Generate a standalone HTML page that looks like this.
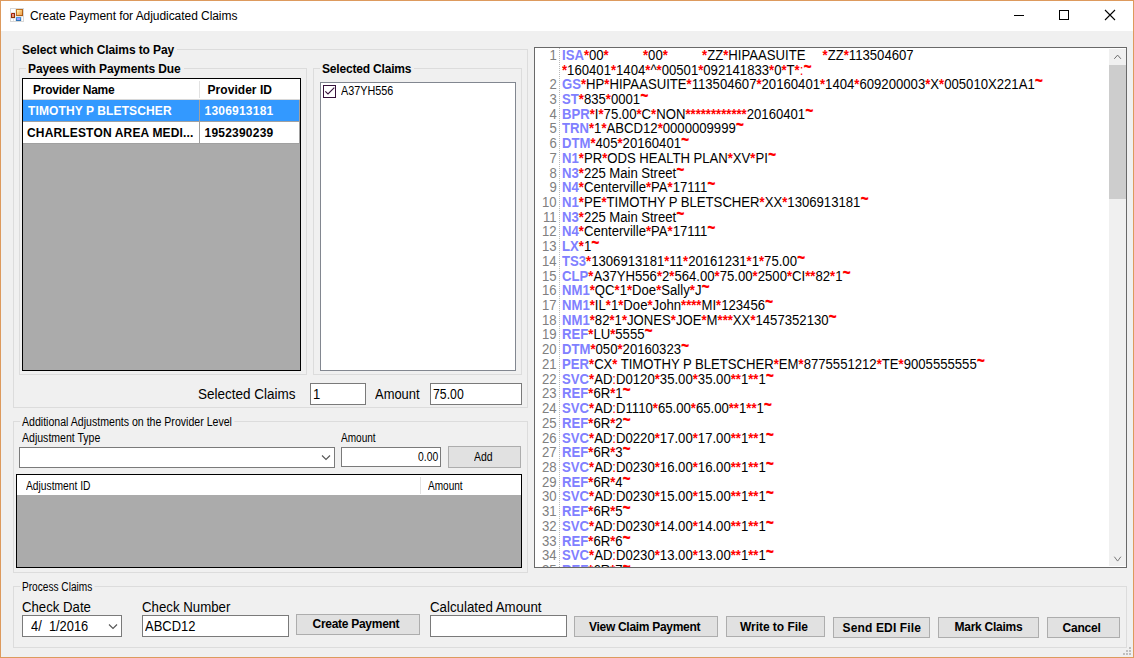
<!DOCTYPE html>
<html><head><meta charset="utf-8"><title>Create Payment for Adjudicated Claims</title>
<style>
html,body{margin:0;padding:0;}
body{width:1134px;height:658px;position:relative;overflow:hidden;background:#f0f0f0;font-family:"Liberation Sans", Arial, sans-serif;}
body div,body svg,body span.t{position:absolute;}
span.t{white-space:pre;}
b.s{color:#8080ff;font-weight:700;}
b.r{color:#ff0000;font-weight:700;}
b.r u{text-decoration:none;font-weight:400;}
b.r i{font-style:normal;position:relative;top:-6.3px;font-size:15px;line-height:0;display:inline-block;transform:scaleY(1.45);transform-origin:50% -5px;}
</style></head><body>
<div style="left:0;top:0;width:1134px;height:658px;background:#dd9a5d;"></div>
<div style="left:1px;top:1px;width:1132px;height:656px;background:#f0f0f0;"></div>
<div style="left:1px;top:1px;width:1132px;height:30px;background:#fff;"></div>
<svg style="left:10px;top:8px" width="14" height="14" viewBox="0 0 14 14" shape-rendering="crispEdges">
<defs><linearGradient id="go" x1="0" y1="0" x2="1" y2="1"><stop offset="0" stop-color="#fffcc0"/><stop offset="0.5" stop-color="#f8c474"/><stop offset="1" stop-color="#f0a050"/></linearGradient>
<linearGradient id="gr" x1="0" y1="0" x2="0" y2="1"><stop offset="0" stop-color="#f47ca4"/><stop offset="1" stop-color="#e8a44c"/></linearGradient>
<linearGradient id="gb" x1="0" y1="0" x2="0" y2="1"><stop offset="0" stop-color="#52a0e8"/><stop offset="1" stop-color="#2c6eb0"/></linearGradient>
<linearGradient id="gob" x1="0" y1="0" x2="1" y2="1"><stop offset="0" stop-color="#cc8028"/><stop offset="1" stop-color="#a8540c"/></linearGradient></defs>
<rect x="0" y="0" width="14" height="14" fill="#d8d8d8"/>
<rect x="1" y="1" width="12" height="12" fill="#fff"/>
<rect x="5" y="1" width="1" height="12" fill="#e6e6e6"/>
<rect x="1" y="4" width="4" height="1" fill="#e6e6e6"/>
<rect x="1" y="10" width="4" height="1" fill="#e6e6e6"/>
<rect x="3" y="11" width="1" height="2" fill="#e6e6e6"/>
<rect x="6" y="8" width="7" height="1" fill="#e6e6e6"/>
<rect x="11" y="9" width="1" height="4" fill="#e6e6e6"/>
<rect x="6" y="1" width="7" height="7" fill="url(#gob)"/>
<rect x="7" y="2" width="5" height="5" fill="url(#go)"/>
<rect x="1" y="5" width="4" height="5" fill="#8c2c0c"/>
<rect x="2" y="6" width="2" height="3" fill="url(#gr)"/>
<rect x="1" y="5" width="1" height="1" fill="#f04418"/>
<rect x="6" y="9" width="5" height="4" fill="url(#gb)"/>
<rect x="7" y="10" width="3" height="2" fill="#9c9cff"/>
</svg>
<span class="t" style="left:30px;top:7.84px;font-size:12px;line-height:16px;font-weight:400;color:#000;letter-spacing:-0.056px;">Create Payment for Adjudicated Claims</span>
<div style="left:1014px;top:15px;width:10px;height:1px;background:#000;"></div>
<div style="left:1059px;top:10px;width:10px;height:10px;border:1px solid #000;box-sizing:border-box;"></div>
<svg style="left:1104px;top:9px" width="12" height="12" viewBox="0 0 12 12"><path d="M1 1 L11 11 M11 1 L1 11" stroke="#000" stroke-width="1.1" fill="none"/></svg>
<div style="left:13px;top:49px;width:515px;height:359px;border:1px solid #dcdcdc;box-sizing:border-box;"></div>
<span class="t" style="left:20px;top:41.84px;font-size:12px;line-height:16px;font-weight:700;color:#000;letter-spacing:-0.1px;background:#f0f0f0;padding:0 3px 0 2px;">Select which Claims to Pay</span>
<div style="left:19px;top:68px;width:288px;height:307px;border:1px solid #dcdcdc;box-sizing:border-box;"></div>
<span class="t" style="left:26px;top:60.84px;font-size:12px;line-height:16px;font-weight:700;color:#000;letter-spacing:-0.087px;background:#f0f0f0;padding:0 3px 0 2px;">Payees with Payments Due</span>
<div style="left:313px;top:68px;width:209px;height:307px;border:1px solid #dcdcdc;box-sizing:border-box;"></div>
<span class="t" style="left:320px;top:60.84px;font-size:12px;line-height:16px;font-weight:700;color:#000;letter-spacing:-0.179px;background:#f0f0f0;padding:0 3px 0 2px;">Selected Claims</span>
<div style="left:22px;top:78px;width:279px;height:293px;background:#ababab;border:1px solid #000;box-sizing:border-box;"></div>
<div style="left:23px;top:79px;width:277px;height:20px;background:#fff;"></div>
<div style="left:199px;top:81px;width:1px;height:17px;background:#e2e2e2;"></div>
<div style="left:23px;top:99px;width:277px;height:1px;background:#d8d8d8;"></div>
<div style="left:23px;top:100px;width:276px;height:21px;background:#3399ff;"></div>
<div style="left:23px;top:121px;width:277px;height:1px;background:#a0a0a0;"></div>
<div style="left:23px;top:122px;width:276px;height:21px;background:#fff;"></div>
<div style="left:23px;top:143px;width:277px;height:1px;background:#a0a0a0;"></div>
<div style="left:199px;top:100px;width:1px;height:44px;background:#a0a0a0;"></div>
<div style="left:299px;top:100px;width:1px;height:44px;background:#a0a0a0;"></div>
<span class="t" style="left:33px;top:81.84px;font-size:12px;line-height:16px;font-weight:700;color:#000;letter-spacing:-0.25px;">Provider Name</span>
<span class="t" style="left:207.5px;top:81.84px;font-size:12px;line-height:16px;font-weight:700;color:#000;letter-spacing:0.05px;">Provider ID</span>
<span class="t" style="left:28px;top:102.84px;font-size:12px;line-height:16px;font-weight:700;color:#fff;letter-spacing:0.111px;">TIMOTHY P BLETSCHER</span>
<span class="t" style="left:204.5px;top:102.84px;font-size:12px;line-height:16px;font-weight:700;color:#fff;letter-spacing:0.222px;">1306913181</span>
<span class="t" style="left:27px;top:124.84px;font-size:12px;line-height:16px;font-weight:700;color:#000;letter-spacing:0.159px;">CHARLESTON AREA MEDI...</span>
<span class="t" style="left:204.5px;top:124.84px;font-size:12px;line-height:16px;font-weight:700;color:#000;letter-spacing:0.222px;">1952390239</span>
<div style="left:320px;top:82px;width:196px;height:289px;background:#fff;border:1px solid #828790;box-sizing:border-box;"></div>
<div style="left:323px;top:85px;width:13px;height:13px;background:#fff;border:1px solid #36103a;box-sizing:border-box;"></div>
<svg style="left:323px;top:85px" width="13" height="13" viewBox="0 0 13 13"><path d="M2.3 6.3 L5 9 L11.3 2.7" stroke="#36103a" stroke-width="1.1" fill="none"/></svg>
<span class="t" style="left:341px;top:82.84px;font-size:12px;line-height:16px;font-weight:400;color:#000;transform:scaleX(0.9017);transform-origin:0px 0;">A37YH556</span>
<span class="t" style="left:198px;top:385.15px;font-size:14px;line-height:18px;font-weight:400;color:#000;transform:scaleX(0.9634);transform-origin:0px 0;">Selected Claims</span>
<div style="left:310px;top:383px;width:56px;height:22px;background:#fff;border:1px solid #7a7a7a;box-sizing:border-box;"></div>
<span class="t" style="left:313px;top:385.15px;font-size:14px;line-height:18px;font-weight:400;color:#000;transform:scaleX(0.93);transform-origin:0px 0;">1</span>
<span class="t" style="left:375px;top:385.15px;font-size:14px;line-height:18px;font-weight:400;color:#000;transform:scaleX(0.9245);transform-origin:0px 0;">Amount</span>
<div style="left:430px;top:383px;width:92px;height:22px;background:#fff;border:1px solid #7a7a7a;box-sizing:border-box;"></div>
<span class="t" style="left:433.3px;top:385.15px;font-size:14px;line-height:18px;font-weight:400;color:#000;transform:scaleX(0.8771);transform-origin:0px 0;">75.00</span>
<div style="left:13px;top:421px;width:515px;height:152px;border:1px solid #dcdcdc;box-sizing:border-box;"></div>
<span class="t" style="left:20px;top:413.84px;font-size:12px;line-height:16px;font-weight:400;color:#000;background:#f0f0f0;padding:0 3px 0 2px;transform:scaleX(0.8815);transform-origin:2px 0;">Additional Adjustments on the Provider Level</span>
<span class="t" style="left:22px;top:429.84px;font-size:12px;line-height:16px;font-weight:400;color:#000;transform:scaleX(0.8787);transform-origin:0px 0;">Adjustment Type</span>
<span class="t" style="left:341px;top:429.84px;font-size:12px;line-height:16px;font-weight:400;color:#000;transform:scaleX(0.8381);transform-origin:0px 0;">Amount</span>
<div style="left:19px;top:447px;width:316px;height:21px;background:#fff;border:1px solid #7a7a7a;box-sizing:border-box;"></div>
<svg style="left:321px;top:454px" width="10" height="7" viewBox="0 0 10 7"><path d="M1 1.5 L5 5.5 L9 1.5" stroke="#555" stroke-width="1.1" fill="none"/></svg>
<div style="left:341px;top:447px;width:100px;height:20px;background:#fff;border:1px solid #7a7a7a;box-sizing:border-box;"></div>
<span class="t" style="left:417.5px;top:448.84px;font-size:12px;line-height:16px;font-weight:400;color:#000;transform:scaleX(0.8625);transform-origin:0px 0;">0.00</span>
<div style="left:448px;top:446px;width:73px;height:22px;background:#e1e1e1;border:1px solid #adadad;box-sizing:border-box;"></div>
<span class="t" style="left:474px;top:448.84px;font-size:12px;line-height:16px;font-weight:400;color:#000;transform:scaleX(0.8714);transform-origin:0px 0;">Add</span>
<div style="left:16px;top:474px;width:506px;height:94px;background:#ababab;border:1px solid #000;box-sizing:border-box;"></div>
<div style="left:17px;top:475px;width:504px;height:20px;background:#fff;"></div>
<div style="left:420px;top:477px;width:1px;height:17px;background:#e2e2e2;"></div>
<span class="t" style="left:26.3px;top:477.84px;font-size:12px;line-height:16px;font-weight:400;color:#000;transform:scaleX(0.8553);transform-origin:0px 0;">Adjustment ID</span>
<span class="t" style="left:428px;top:477.84px;font-size:12px;line-height:16px;font-weight:400;color:#000;transform:scaleX(0.8381);transform-origin:0px 0;">Amount</span>
<div style="left:13px;top:586px;width:1114px;height:62px;border:1px solid #dcdcdc;box-sizing:border-box;"></div>
<span class="t" style="left:20px;top:578.84px;font-size:12px;line-height:16px;font-weight:400;color:#000;background:#f0f0f0;padding:0 3px 0 2px;transform:scaleX(0.8434);transform-origin:2px 0;">Process Claims</span>
<span class="t" style="left:22.3px;top:598.15px;font-size:14px;line-height:18px;font-weight:400;color:#000;transform:scaleX(0.9425);transform-origin:0px 0;">Check Date</span>
<div style="left:22px;top:615px;width:100px;height:22px;background:#fff;border:1px solid #7a7a7a;box-sizing:border-box;"></div>
<span class="t" style="left:31px;top:617.15px;font-size:14px;line-height:18px;font-weight:400;color:#000;transform:scaleX(0.9194);transform-origin:0px 0;">4/  1/2016</span>
<svg style="left:108px;top:624px" width="10" height="7" viewBox="0 0 10 7"><path d="M1 0.5 L5 4.5 L9 0.5" stroke="#555" stroke-width="1.1" fill="none"/></svg>
<span class="t" style="left:142px;top:598.15px;font-size:14px;line-height:18px;font-weight:400;color:#000;transform:scaleX(0.9468);transform-origin:0px 0;">Check Number</span>
<div style="left:142px;top:615px;width:147px;height:22px;background:#fff;border:1px solid #7a7a7a;box-sizing:border-box;"></div>
<span class="t" style="left:145px;top:617.15px;font-size:14px;line-height:18px;font-weight:400;color:#000;transform:scaleX(0.9259);transform-origin:0px 0;">ABCD12</span>
<div style="left:296px;top:614px;width:124px;height:21px;background:#e1e1e1;border:1px solid #adadad;box-sizing:border-box;"></div>
<span class="t" style="left:312.5px;top:615.84px;font-size:12px;line-height:16px;font-weight:700;color:#000;letter-spacing:-0.277px;">Create Payment</span>
<span class="t" style="left:430.3px;top:598.15px;font-size:14px;line-height:18px;font-weight:400;color:#000;transform:scaleX(0.9492);transform-origin:0px 0;">Calculated Amount</span>
<div style="left:430px;top:615px;width:137px;height:22px;background:#fff;border:1px solid #7a7a7a;box-sizing:border-box;"></div>
<div style="left:574px;top:616px;width:144px;height:21px;background:#e1e1e1;border:1px solid #adadad;box-sizing:border-box;"></div>
<span class="t" style="left:589px;top:618.84px;font-size:12px;line-height:16px;font-weight:700;color:#000;letter-spacing:-0.294px;">View Claim Payment</span>
<div style="left:726px;top:616px;width:99px;height:21px;background:#e1e1e1;border:1px solid #adadad;box-sizing:border-box;"></div>
<span class="t" style="left:740px;top:618.84px;font-size:12px;line-height:16px;font-weight:700;color:#000;letter-spacing:-0.042px;">Write to File</span>
<div style="left:833px;top:617px;width:97px;height:21px;background:#e1e1e1;border:1px solid #adadad;box-sizing:border-box;"></div>
<span class="t" style="left:842.5px;top:619.84px;font-size:12px;line-height:16px;font-weight:700;color:#000;letter-spacing:0.15px;">Send EDI File</span>
<div style="left:938px;top:617px;width:101px;height:21px;background:#e1e1e1;border:1px solid #adadad;box-sizing:border-box;"></div>
<span class="t" style="left:954.5px;top:618.84px;font-size:12px;line-height:16px;font-weight:700;color:#000;letter-spacing:-0.25px;">Mark Claims</span>
<div style="left:1047px;top:617px;width:73px;height:21px;background:#e1e1e1;border:1px solid #adadad;box-sizing:border-box;"></div>
<span class="t" style="left:1062.5px;top:619.84px;font-size:12px;line-height:16px;font-weight:700;color:#000;letter-spacing:-0.2px;">Cancel</span>
<div style="left:1129px;top:647px;width:2px;height:2px;background:#bfbfbf;"></div>
<div style="left:1126px;top:650px;width:2px;height:2px;background:#bfbfbf;"></div>
<div style="left:1129px;top:650px;width:2px;height:2px;background:#bfbfbf;"></div>
<div style="left:1123px;top:653px;width:2px;height:2px;background:#bfbfbf;"></div>
<div style="left:1126px;top:653px;width:2px;height:2px;background:#bfbfbf;"></div>
<div style="left:1129px;top:653px;width:2px;height:2px;background:#bfbfbf;"></div>
<div style="left:534px;top:47px;width:593px;height:521px;background:#fff;border:1px solid #696969;box-sizing:border-box;"></div>
<div style="left:1109px;top:49px;width:17px;height:517px;background:#f0f0f0;"></div>
<div style="left:1109px;top:65px;width:17px;height:134px;background:#cdcdcd;"></div>
<svg style="left:1113px;top:53px" width="10" height="7" viewBox="0 0 10 7"><path d="M1.3 5.8 L4.6 2.1 L7.9 5.8" stroke="#6a6a6a" stroke-width="1" fill="none"/></svg>
<svg style="left:1113px;top:555px" width="10" height="7" viewBox="0 0 10 7"><path d="M1.3 1.7 L4.6 6.1 L7.9 1.7" stroke="#7a7a7a" stroke-width="1" fill="none"/></svg>
<div style="left:535px;top:48px;width:574px;height:519px;overflow:hidden;">
<div style="left:24px;top:0;width:1px;height:519px;background:repeating-linear-gradient(to bottom,#b8b8b8 0 1px,#fff 1px 2px);"></div>
<span class="t" style="right:552px;top:0.00px;font-size:14px;line-height:15px;color:#808080;transform:scaleX(0.938);transform-origin:100% 0;">1</span>
<span class="t" style="left:27px;top:0.00px;font-size:14px;line-height:15px;color:#000;word-spacing:-0.24px;transform:scaleX(0.938);transform-origin:0 0;"><b class="s">ISA</b><b class="r">*</b>00<b class="r">*</b>          <b class="r">*</b>00<b class="r">*</b>          <b class="r">*</b>ZZ<b class="r">*</b>HIPAASUITE     <b class="r">*</b>ZZ<b class="r">*</b>113504607      </span>
<span class="t" style="left:27px;top:15.00px;font-size:14px;line-height:15px;color:#000;word-spacing:-0.24px;transform:scaleX(0.938);transform-origin:0 0;"><b class="r">*</b>160401<b class="r">*</b>1404<b class="r">*</b>^<b class="r">*</b>00501<b class="r">*</b>092141833<b class="r">*</b>0<b class="r">*</b>T<b class="r">*<u>:</u><i>~</i></b></span>
<span class="t" style="right:552px;top:29.00px;font-size:14px;line-height:15px;color:#808080;transform:scaleX(0.938);transform-origin:100% 0;">2</span>
<span class="t" style="left:27px;top:29.00px;font-size:14px;line-height:15px;color:#000;word-spacing:-0.24px;transform:scaleX(0.938);transform-origin:0 0;"><b class="s">GS</b><b class="r">*</b>HP<b class="r">*</b>HIPAASUITE<b class="r">*</b>113504607<b class="r">*</b>20160401<b class="r">*</b>1404<b class="r">*</b>609200003<b class="r">*</b>X<b class="r">*</b>005010X221A1<b class="r"><i>~</i></b></span>
<span class="t" style="right:552px;top:44.00px;font-size:14px;line-height:15px;color:#808080;transform:scaleX(0.938);transform-origin:100% 0;">3</span>
<span class="t" style="left:27px;top:44.00px;font-size:14px;line-height:15px;color:#000;word-spacing:-0.24px;transform:scaleX(0.938);transform-origin:0 0;"><b class="s">ST</b><b class="r">*</b>835<b class="r">*</b>0001<b class="r"><i>~</i></b></span>
<span class="t" style="right:552px;top:59.00px;font-size:14px;line-height:15px;color:#808080;transform:scaleX(0.938);transform-origin:100% 0;">4</span>
<span class="t" style="left:27px;top:59.00px;font-size:14px;line-height:15px;color:#000;word-spacing:-0.24px;transform:scaleX(0.938);transform-origin:0 0;"><b class="s">BPR</b><b class="r">*</b>I<b class="r">*</b>75.00<b class="r">*</b>C<b class="r">*</b>NON<b class="r">************</b>20160401<b class="r"><i>~</i></b></span>
<span class="t" style="right:552px;top:73.00px;font-size:14px;line-height:15px;color:#808080;transform:scaleX(0.938);transform-origin:100% 0;">5</span>
<span class="t" style="left:27px;top:73.00px;font-size:14px;line-height:15px;color:#000;word-spacing:-0.24px;transform:scaleX(0.938);transform-origin:0 0;"><b class="s">TRN</b><b class="r">*</b>1<b class="r">*</b>ABCD12<b class="r">*</b>0000009999<b class="r"><i>~</i></b></span>
<span class="t" style="right:552px;top:88.00px;font-size:14px;line-height:15px;color:#808080;transform:scaleX(0.938);transform-origin:100% 0;">6</span>
<span class="t" style="left:27px;top:88.00px;font-size:14px;line-height:15px;color:#000;word-spacing:-0.24px;transform:scaleX(0.938);transform-origin:0 0;"><b class="s">DTM</b><b class="r">*</b>405<b class="r">*</b>20160401<b class="r"><i>~</i></b></span>
<span class="t" style="right:552px;top:103.00px;font-size:14px;line-height:15px;color:#808080;transform:scaleX(0.938);transform-origin:100% 0;">7</span>
<span class="t" style="left:27px;top:103.00px;font-size:14px;line-height:15px;color:#000;word-spacing:-0.24px;transform:scaleX(0.938);transform-origin:0 0;"><b class="s">N1</b><b class="r">*</b>PR<b class="r">*</b>ODS HEALTH PLAN<b class="r">*</b>XV<b class="r">*</b>PI<b class="r"><i>~</i></b></span>
<span class="t" style="right:552px;top:118.00px;font-size:14px;line-height:15px;color:#808080;transform:scaleX(0.938);transform-origin:100% 0;">8</span>
<span class="t" style="left:27px;top:118.00px;font-size:14px;line-height:15px;color:#000;word-spacing:-0.24px;transform:scaleX(0.938);transform-origin:0 0;"><b class="s">N3</b><b class="r">*</b>225 Main Street<b class="r"><i>~</i></b></span>
<span class="t" style="right:552px;top:132.00px;font-size:14px;line-height:15px;color:#808080;transform:scaleX(0.938);transform-origin:100% 0;">9</span>
<span class="t" style="left:27px;top:132.00px;font-size:14px;line-height:15px;color:#000;word-spacing:-0.24px;transform:scaleX(0.938);transform-origin:0 0;"><b class="s">N4</b><b class="r">*</b>Centerville<b class="r">*</b>PA<b class="r">*</b>17111<b class="r"><i>~</i></b></span>
<span class="t" style="right:552px;top:147.00px;font-size:14px;line-height:15px;color:#808080;transform:scaleX(0.938);transform-origin:100% 0;">10</span>
<span class="t" style="left:27px;top:147.00px;font-size:14px;line-height:15px;color:#000;word-spacing:-0.24px;transform:scaleX(0.938);transform-origin:0 0;"><b class="s">N1</b><b class="r">*</b>PE<b class="r">*</b>TIMOTHY P BLETSCHER<b class="r">*</b>XX<b class="r">*</b>1306913181<b class="r"><i>~</i></b></span>
<span class="t" style="right:552px;top:162.00px;font-size:14px;line-height:15px;color:#808080;transform:scaleX(0.938);transform-origin:100% 0;">11</span>
<span class="t" style="left:27px;top:162.00px;font-size:14px;line-height:15px;color:#000;word-spacing:-0.24px;transform:scaleX(0.938);transform-origin:0 0;"><b class="s">N3</b><b class="r">*</b>225 Main Street<b class="r"><i>~</i></b></span>
<span class="t" style="right:552px;top:176.00px;font-size:14px;line-height:15px;color:#808080;transform:scaleX(0.938);transform-origin:100% 0;">12</span>
<span class="t" style="left:27px;top:176.00px;font-size:14px;line-height:15px;color:#000;word-spacing:-0.24px;transform:scaleX(0.938);transform-origin:0 0;"><b class="s">N4</b><b class="r">*</b>Centerville<b class="r">*</b>PA<b class="r">*</b>17111<b class="r"><i>~</i></b></span>
<span class="t" style="right:552px;top:191.00px;font-size:14px;line-height:15px;color:#808080;transform:scaleX(0.938);transform-origin:100% 0;">13</span>
<span class="t" style="left:27px;top:191.00px;font-size:14px;line-height:15px;color:#000;word-spacing:-0.24px;transform:scaleX(0.938);transform-origin:0 0;"><b class="s">LX</b><b class="r">*</b>1<b class="r"><i>~</i></b></span>
<span class="t" style="right:552px;top:206.00px;font-size:14px;line-height:15px;color:#808080;transform:scaleX(0.938);transform-origin:100% 0;">14</span>
<span class="t" style="left:27px;top:206.00px;font-size:14px;line-height:15px;color:#000;word-spacing:-0.24px;transform:scaleX(0.938);transform-origin:0 0;"><b class="s">TS3</b><b class="r">*</b>1306913181<b class="r">*</b>11<b class="r">*</b>20161231<b class="r">*</b>1<b class="r">*</b>75.00<b class="r"><i>~</i></b></span>
<span class="t" style="right:552px;top:221.00px;font-size:14px;line-height:15px;color:#808080;transform:scaleX(0.938);transform-origin:100% 0;">15</span>
<span class="t" style="left:27px;top:221.00px;font-size:14px;line-height:15px;color:#000;word-spacing:-0.24px;transform:scaleX(0.938);transform-origin:0 0;"><b class="s">CLP</b><b class="r">*</b>A37YH556<b class="r">*</b>2<b class="r">*</b>564.00<b class="r">*</b>75.00<b class="r">*</b>2500<b class="r">*</b>CI<b class="r">**</b>82<b class="r">*</b>1<b class="r"><i>~</i></b></span>
<span class="t" style="right:552px;top:235.00px;font-size:14px;line-height:15px;color:#808080;transform:scaleX(0.938);transform-origin:100% 0;">16</span>
<span class="t" style="left:27px;top:235.00px;font-size:14px;line-height:15px;color:#000;word-spacing:-0.24px;transform:scaleX(0.938);transform-origin:0 0;"><b class="s">NM1</b><b class="r">*</b>QC<b class="r">*</b>1<b class="r">*</b>Doe<b class="r">*</b>Sally<b class="r">*</b>J<b class="r"><i>~</i></b></span>
<span class="t" style="right:552px;top:250.00px;font-size:14px;line-height:15px;color:#808080;transform:scaleX(0.938);transform-origin:100% 0;">17</span>
<span class="t" style="left:27px;top:250.00px;font-size:14px;line-height:15px;color:#000;word-spacing:-0.24px;transform:scaleX(0.938);transform-origin:0 0;"><b class="s">NM1</b><b class="r">*</b>IL<b class="r">*</b>1<b class="r">*</b>Doe<b class="r">*</b>John<b class="r">****</b>MI<b class="r">*</b>123456<b class="r"><i>~</i></b></span>
<span class="t" style="right:552px;top:265.00px;font-size:14px;line-height:15px;color:#808080;transform:scaleX(0.938);transform-origin:100% 0;">18</span>
<span class="t" style="left:27px;top:265.00px;font-size:14px;line-height:15px;color:#000;word-spacing:-0.24px;transform:scaleX(0.938);transform-origin:0 0;"><b class="s">NM1</b><b class="r">*</b>82<b class="r">*</b>1<b class="r">*</b>JONES<b class="r">*</b>JOE<b class="r">*</b>M<b class="r">***</b>XX<b class="r">*</b>1457352130<b class="r"><i>~</i></b></span>
<span class="t" style="right:552px;top:279.00px;font-size:14px;line-height:15px;color:#808080;transform:scaleX(0.938);transform-origin:100% 0;">19</span>
<span class="t" style="left:27px;top:279.00px;font-size:14px;line-height:15px;color:#000;word-spacing:-0.24px;transform:scaleX(0.938);transform-origin:0 0;"><b class="s">REF</b><b class="r">*</b>LU<b class="r">*</b>5555<b class="r"><i>~</i></b></span>
<span class="t" style="right:552px;top:294.00px;font-size:14px;line-height:15px;color:#808080;transform:scaleX(0.938);transform-origin:100% 0;">20</span>
<span class="t" style="left:27px;top:294.00px;font-size:14px;line-height:15px;color:#000;word-spacing:-0.24px;transform:scaleX(0.938);transform-origin:0 0;"><b class="s">DTM</b><b class="r">*</b>050<b class="r">*</b>20160323<b class="r"><i>~</i></b></span>
<span class="t" style="right:552px;top:309.00px;font-size:14px;line-height:15px;color:#808080;transform:scaleX(0.938);transform-origin:100% 0;">21</span>
<span class="t" style="left:27px;top:309.00px;font-size:14px;line-height:15px;color:#000;word-spacing:-0.24px;transform:scaleX(0.938);transform-origin:0 0;"><b class="s">PER</b><b class="r">*</b>CX<b class="r">*</b> TIMOTHY P BLETSCHER<b class="r">*</b>EM<b class="r">*</b>8775551212<b class="r">*</b>TE<b class="r">*</b>9005555555<b class="r"><i>~</i></b></span>
<span class="t" style="right:552px;top:324.00px;font-size:14px;line-height:15px;color:#808080;transform:scaleX(0.938);transform-origin:100% 0;">22</span>
<span class="t" style="left:27px;top:324.00px;font-size:14px;line-height:15px;color:#000;word-spacing:-0.24px;transform:scaleX(0.938);transform-origin:0 0;"><b class="s">SVC</b><b class="r">*</b>AD<b class="r"><u>:</u></b>D0120<b class="r">*</b>35.00<b class="r">*</b>35.00<b class="r">**</b>1<b class="r">**</b>1<b class="r"><i>~</i></b></span>
<span class="t" style="right:552px;top:338.00px;font-size:14px;line-height:15px;color:#808080;transform:scaleX(0.938);transform-origin:100% 0;">23</span>
<span class="t" style="left:27px;top:338.00px;font-size:14px;line-height:15px;color:#000;word-spacing:-0.24px;transform:scaleX(0.938);transform-origin:0 0;"><b class="s">REF</b><b class="r">*</b>6R<b class="r">*</b>1<b class="r"><i>~</i></b></span>
<span class="t" style="right:552px;top:353.00px;font-size:14px;line-height:15px;color:#808080;transform:scaleX(0.938);transform-origin:100% 0;">24</span>
<span class="t" style="left:27px;top:353.00px;font-size:14px;line-height:15px;color:#000;word-spacing:-0.24px;transform:scaleX(0.938);transform-origin:0 0;"><b class="s">SVC</b><b class="r">*</b>AD<b class="r"><u>:</u></b>D1110<b class="r">*</b>65.00<b class="r">*</b>65.00<b class="r">**</b>1<b class="r">**</b>1<b class="r"><i>~</i></b></span>
<span class="t" style="right:552px;top:368.00px;font-size:14px;line-height:15px;color:#808080;transform:scaleX(0.938);transform-origin:100% 0;">25</span>
<span class="t" style="left:27px;top:368.00px;font-size:14px;line-height:15px;color:#000;word-spacing:-0.24px;transform:scaleX(0.938);transform-origin:0 0;"><b class="s">REF</b><b class="r">*</b>6R<b class="r">*</b>2<b class="r"><i>~</i></b></span>
<span class="t" style="right:552px;top:383.00px;font-size:14px;line-height:15px;color:#808080;transform:scaleX(0.938);transform-origin:100% 0;">26</span>
<span class="t" style="left:27px;top:383.00px;font-size:14px;line-height:15px;color:#000;word-spacing:-0.24px;transform:scaleX(0.938);transform-origin:0 0;"><b class="s">SVC</b><b class="r">*</b>AD<b class="r"><u>:</u></b>D0220<b class="r">*</b>17.00<b class="r">*</b>17.00<b class="r">**</b>1<b class="r">**</b>1<b class="r"><i>~</i></b></span>
<span class="t" style="right:552px;top:397.00px;font-size:14px;line-height:15px;color:#808080;transform:scaleX(0.938);transform-origin:100% 0;">27</span>
<span class="t" style="left:27px;top:397.00px;font-size:14px;line-height:15px;color:#000;word-spacing:-0.24px;transform:scaleX(0.938);transform-origin:0 0;"><b class="s">REF</b><b class="r">*</b>6R<b class="r">*</b>3<b class="r"><i>~</i></b></span>
<span class="t" style="right:552px;top:412.00px;font-size:14px;line-height:15px;color:#808080;transform:scaleX(0.938);transform-origin:100% 0;">28</span>
<span class="t" style="left:27px;top:412.00px;font-size:14px;line-height:15px;color:#000;word-spacing:-0.24px;transform:scaleX(0.938);transform-origin:0 0;"><b class="s">SVC</b><b class="r">*</b>AD<b class="r"><u>:</u></b>D0230<b class="r">*</b>16.00<b class="r">*</b>16.00<b class="r">**</b>1<b class="r">**</b>1<b class="r"><i>~</i></b></span>
<span class="t" style="right:552px;top:427.00px;font-size:14px;line-height:15px;color:#808080;transform:scaleX(0.938);transform-origin:100% 0;">29</span>
<span class="t" style="left:27px;top:427.00px;font-size:14px;line-height:15px;color:#000;word-spacing:-0.24px;transform:scaleX(0.938);transform-origin:0 0;"><b class="s">REF</b><b class="r">*</b>6R<b class="r">*</b>4<b class="r"><i>~</i></b></span>
<span class="t" style="right:552px;top:441.00px;font-size:14px;line-height:15px;color:#808080;transform:scaleX(0.938);transform-origin:100% 0;">30</span>
<span class="t" style="left:27px;top:441.00px;font-size:14px;line-height:15px;color:#000;word-spacing:-0.24px;transform:scaleX(0.938);transform-origin:0 0;"><b class="s">SVC</b><b class="r">*</b>AD<b class="r"><u>:</u></b>D0230<b class="r">*</b>15.00<b class="r">*</b>15.00<b class="r">**</b>1<b class="r">**</b>1<b class="r"><i>~</i></b></span>
<span class="t" style="right:552px;top:456.00px;font-size:14px;line-height:15px;color:#808080;transform:scaleX(0.938);transform-origin:100% 0;">31</span>
<span class="t" style="left:27px;top:456.00px;font-size:14px;line-height:15px;color:#000;word-spacing:-0.24px;transform:scaleX(0.938);transform-origin:0 0;"><b class="s">REF</b><b class="r">*</b>6R<b class="r">*</b>5<b class="r"><i>~</i></b></span>
<span class="t" style="right:552px;top:471.00px;font-size:14px;line-height:15px;color:#808080;transform:scaleX(0.938);transform-origin:100% 0;">32</span>
<span class="t" style="left:27px;top:471.00px;font-size:14px;line-height:15px;color:#000;word-spacing:-0.24px;transform:scaleX(0.938);transform-origin:0 0;"><b class="s">SVC</b><b class="r">*</b>AD<b class="r"><u>:</u></b>D0230<b class="r">*</b>14.00<b class="r">*</b>14.00<b class="r">**</b>1<b class="r">**</b>1<b class="r"><i>~</i></b></span>
<span class="t" style="right:552px;top:486.00px;font-size:14px;line-height:15px;color:#808080;transform:scaleX(0.938);transform-origin:100% 0;">33</span>
<span class="t" style="left:27px;top:486.00px;font-size:14px;line-height:15px;color:#000;word-spacing:-0.24px;transform:scaleX(0.938);transform-origin:0 0;"><b class="s">REF</b><b class="r">*</b>6R<b class="r">*</b>6<b class="r"><i>~</i></b></span>
<span class="t" style="right:552px;top:500.00px;font-size:14px;line-height:15px;color:#808080;transform:scaleX(0.938);transform-origin:100% 0;">34</span>
<span class="t" style="left:27px;top:500.00px;font-size:14px;line-height:15px;color:#000;word-spacing:-0.24px;transform:scaleX(0.938);transform-origin:0 0;"><b class="s">SVC</b><b class="r">*</b>AD<b class="r"><u>:</u></b>D0230<b class="r">*</b>13.00<b class="r">*</b>13.00<b class="r">**</b>1<b class="r">**</b>1<b class="r"><i>~</i></b></span>
<span class="t" style="right:552px;top:515.00px;font-size:14px;line-height:15px;color:#808080;transform:scaleX(0.938);transform-origin:100% 0;">35</span>
<span class="t" style="left:27px;top:515.00px;font-size:14px;line-height:15px;color:#000;word-spacing:-0.24px;transform:scaleX(0.938);transform-origin:0 0;"><b class="s">REF</b><b class="r">*</b>6R<b class="r">*</b>7<b class="r"><i>~</i></b></span>
</div>
</body></html>
